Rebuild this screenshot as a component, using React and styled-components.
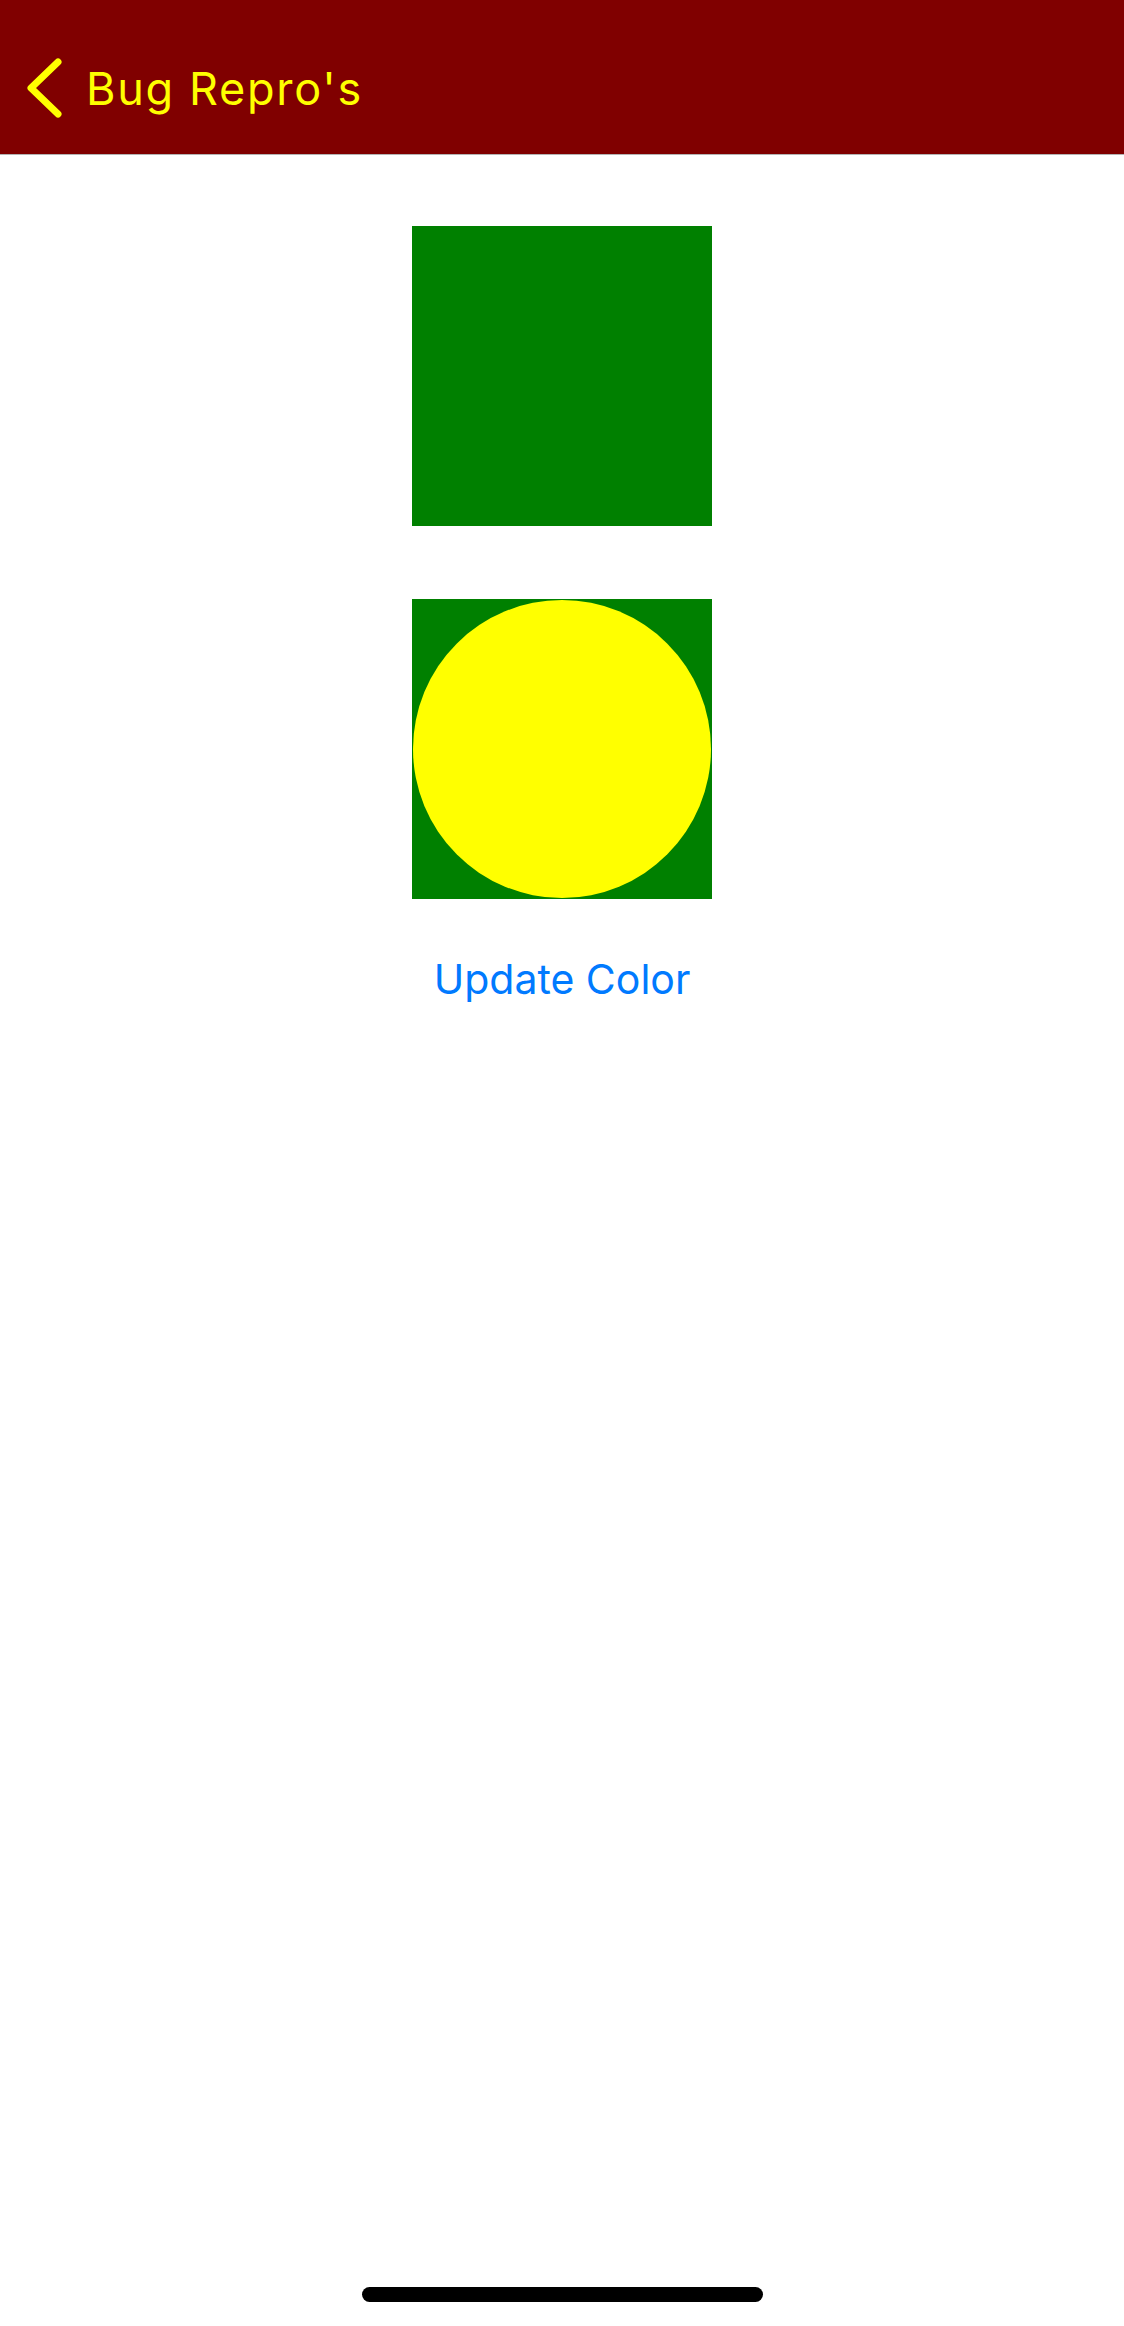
import React, { useState } from 'react';
import styled, { createGlobalStyle } from 'styled-components';

const GlobalStyle = createGlobalStyle`
  html, body {
    margin: 0;
    padding: 0;
    background: #ffffff;
  }
  body {
    font-family: Inter, "Noto Sans", "Liberation Sans", sans-serif;
  }
`;

const Page = styled.div`
  display: flex;
  flex-direction: column;
  min-height: 100vh;
  background: #ffffff;
`;

const Header = styled.header`
  box-sizing: border-box;
  height: 155px;
  padding-top: 22px;
  display: flex;
  align-items: center;
  background: #800000;
  border-bottom: 1px solid #b3b3b3;
`;

const BackButton = styled.button`
  display: flex;
  align-items: center;
  gap: 22px;
  margin-left: 26px;
  padding: 0;
  border: none;
  background: none;
  font-family: inherit;
  cursor: pointer;
`;

const Title = styled.span`
  font-size: 45px;
  letter-spacing: 1.7px;
  color: #ffff00;
`;

const Content = styled.main`
  display: flex;
  flex-direction: column;
  align-items: center;
  padding-top: 71px;
`;

const Squares = styled.div`
  display: flex;
  flex-direction: column;
  gap: 73px;
`;

const Square = styled.div`
  width: 300px;
  height: 300px;
  background: #008000;
  display: flex;
  align-items: center;
  justify-content: center;
`;

const Circle = styled.div`
  width: 298px;
  height: 298px;
  border-radius: 50%;
  background: ${(p) => p.color};
`;

const LinkButton = styled.button`
  margin-top: 55px;
  padding: 0;
  border: none;
  background: none;
  font-family: inherit;
  font-size: 41px;
  color: #007aff;
  cursor: pointer;
`;

const HomeIndicator = styled.div`
  margin: auto auto 24px;
  width: 401px;
  height: 15px;
  border-radius: 8px;
  background: #000000;
`;

function Chevron() {
  return (
    <svg width="38" height="60" viewBox="0 0 38 60">
      <polyline
        points="32,4 5,30 32,56"
        fill="none"
        stroke="#ffff00"
        strokeWidth="7"
        strokeLinecap="round"
        strokeLinejoin="round"
      />
    </svg>
  );
}

function App() {
  const [circleColor, setCircleColor] = useState('#ffff00');

  const updateColor = () => {
    // toggle the circle colour
    setCircleColor(circleColor === '#ffff00' ? '#ff0000' : '#ffff00');
  };

  return (
    <Page>
      <GlobalStyle />
      <Header>
        <BackButton>
          <Chevron />
          <Title>Bug Repro's</Title>
        </BackButton>
      </Header>
      <Content>
        <Squares>
          <Square />
          <Square>
            <Circle color={circleColor} />
          </Square>
        </Squares>
        <LinkButton onClick={updateColor}>Update Color</LinkButton>
      </Content>
      <HomeIndicator />
    </Page>
  );
}

export default App;
